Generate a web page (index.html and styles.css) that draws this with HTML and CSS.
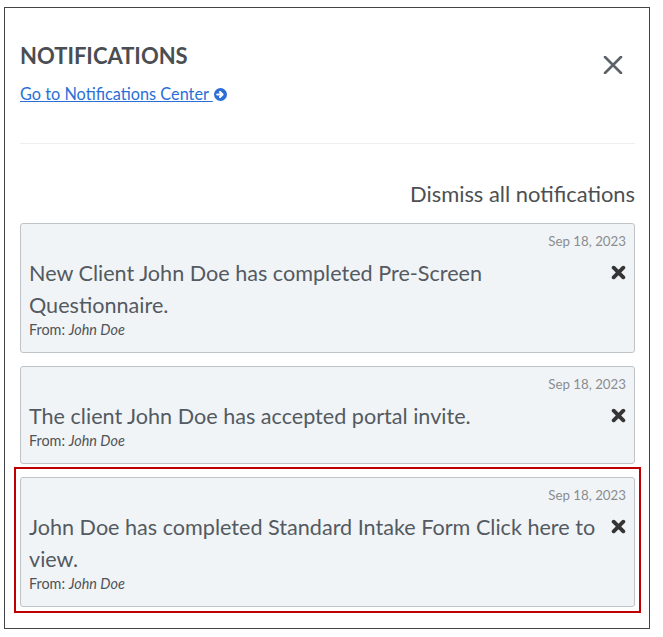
FILE: index.html
```html
<!DOCTYPE html>
<html>
<head>
    <title>Notifications</title>
    <link rel="stylesheet" href="styles.css">
</head>
<body>
    <div class="panel">
        <!-- Header with title and link to the full center -->
        <div class="panel-head">
            <div>
                <h2 class="panel-title">NOTIFICATIONS</h2>
                <a class="center-link" href="#"><span class="center-text">Go to Notifications Center </span><svg class="arrow-icon" viewBox="0 0 16 16" width="13" height="13"><circle cx="8" cy="8" r="8" fill="#2b6fd6"/><path d="M4 8h6.2M7.4 4.9L10.6 8 7.4 11.1" fill="none" stroke="#fff" stroke-width="2.6" stroke-linecap="round" stroke-linejoin="round"/></svg></a>
            </div>
            <button class="close-btn" aria-label="Close">
                <svg viewBox="0 0 20 18" width="20" height="18"><path d="M2 1L18 17M18 1L2 17" stroke="#5c6269" stroke-width="2.6" stroke-linecap="round"/></svg>
            </button>
        </div>

        <hr class="divider">

        <div class="dismiss-row">
            <a href="#" class="dismiss-all">Dismiss all notifications</a>
        </div>

        <!-- Notification list -->
        <ul class="note-list">
            <li class="note">
                <div class="note-date">Sep 18, 2023</div>
                <div class="note-body">
                    <span class="note-text">New Client John Doe has completed Pre-Screen Questionnaire.</span>
                    <span class="note-x"><svg viewBox="0 0 14 14" width="15" height="15"><path d="M2.5 2.5L11.5 11.5M11.5 2.5L2.5 11.5" stroke="#353535" stroke-width="3.6" stroke-linecap="round"/></svg></span>
                </div>
                <div class="note-from">From: <i>John Doe</i></div>
            </li>
            <li class="note">
                <div class="note-date">Sep 18, 2023</div>
                <div class="note-body">
                    <span class="note-text">The client John Doe has accepted portal invite.</span>
                    <span class="note-x"><svg viewBox="0 0 14 14" width="15" height="15"><path d="M2.5 2.5L11.5 11.5M11.5 2.5L2.5 11.5" stroke="#353535" stroke-width="3.6" stroke-linecap="round"/></svg></span>
                </div>
                <div class="note-from">From: <i>John Doe</i></div>
            </li>
            <li class="note highlighted">
                <div class="note-date">Sep 18, 2023</div>
                <div class="note-body">
                    <span class="note-text">John Doe has completed Standard Intake Form Click here to view.</span>
                    <span class="note-x"><svg viewBox="0 0 14 14" width="15" height="15"><path d="M2.5 2.5L11.5 11.5M11.5 2.5L2.5 11.5" stroke="#353535" stroke-width="3.6" stroke-linecap="round"/></svg></span>
                </div>
                <div class="note-from">From: <i>John Doe</i></div>
            </li>
        </ul>
    </div>
</body>
</html>
```

FILE: styles.css
```css
/* Notifications drawer */
body {
    margin: 0;
    background: #fff;
    font-family: Lato, "Open Sans", sans-serif;
    color: #545a61;
}

.panel {
    box-sizing: border-box;
    width: 646px;
    height: 622px;
    margin: 7px 0 0 4px;
    padding: 35px 14px 0 15px;
    border: 1px solid #444;
}

.panel-head {
    display: flex;
    justify-content: space-between;
    align-items: flex-start;
}

.panel-title {
    margin: 0;
    font-size: 22px;
    line-height: 26px;
    font-weight: 700;
    color: #4a4e53;
}

.center-link {
    display: inline-flex;
    align-items: center;
    margin-top: 15px;
    font-size: 16.3px;
    line-height: 20px;
    color: #2b6fd6;
    text-decoration: none;
}

.center-text {
    text-decoration: underline;
    white-space: pre;
}

.arrow-icon {
    margin-left: 1px;
}

.close-btn {
    margin: 13px 12px 0 0;
    padding: 0;
    border: 0;
    background: none;
    line-height: 0;
}

.divider {
    margin: 39px 0 0;
    border: 0;
    border-top: 1px solid #eeeeee;
}

.dismiss-row {
    margin-top: 35px;
    text-align: right;
}

.dismiss-all {
    font-size: 21.9px;
    line-height: 30px;
    color: #4d4f52;
    text-decoration: none;
}

.note-list {
    list-style: none;
    margin: 14px 0 0;
    padding: 0;
}

.note {
    position: relative;
    margin-bottom: 13px;
    padding: 8px 8px 13px 8px;
    background: #f1f4f7;
    border: 1px solid #bfc4c9;
    border-radius: 3px;
}

/* red box drawn round the selected card */
.note.highlighted::before {
    content: "";
    position: absolute;
    top: -11px;
    left: -7px;
    right: -7px;
    bottom: -7px;
    border: 2px solid #c00000;
}

.note-date {
    text-align: right;
    font-size: 13.3px;
    line-height: 18px;
    color: #8a8d90;
}

.note-body {
    display: flex;
    align-items: flex-start;
    gap: 10px;
    margin-top: 7px;
}

.note-text {
    flex: 1;
    font-size: 21.6px;
    line-height: 32px;
    color: #545a61;
}

.note-x {
    margin-top: 8px;
    line-height: 0;
}

.note-from {
    font-size: 14.4px;
    line-height: 18px;
    color: #4f5357;
}
```
